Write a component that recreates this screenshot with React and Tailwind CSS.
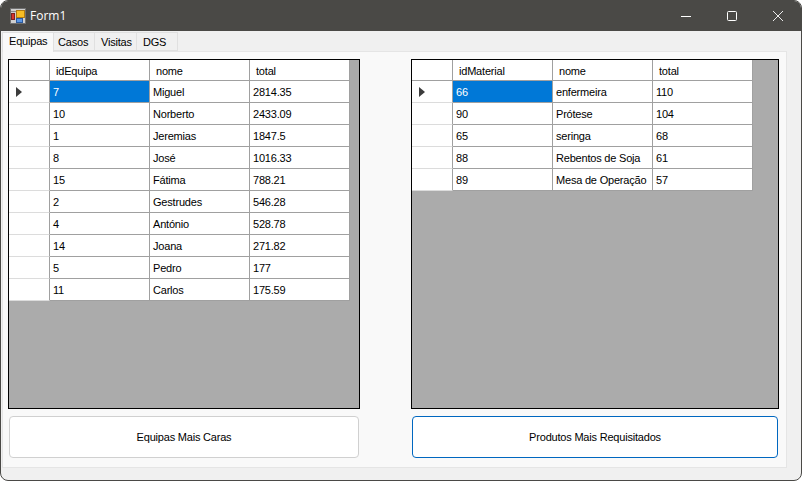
const teams = [
  ["7", "Miguel", "2814.35"],
  ["10", "Norberto", "2433.09"],
  ["1", "Jeremias", "1847.5"],
  ["8", "José", "1016.33"],
  ["15", "Fátima", "788.21"],
  ["2", "Gestrudes", "546.28"],
  ["4", "António", "528.78"],
  ["14", "Joana", "271.82"],
  ["5", "Pedro", "177"],
  ["11", "Carlos", "175.59"]
];

const materials = [
  ["66", "enfermeira", "110"],
  ["90", "Prótese", "104"],
  ["65", "seringa", "68"],
  ["88", "Rebentos de Soja", "61"],
  ["89", "Mesa de Operação", "57"]
];

const FormIcon = () => (
  <svg width="16" height="16" viewBox="0 0 16 16" className="shrink-0">
    <rect x="0.5" y="0.5" width="15" height="15" fill="#cfcfcf" stroke="#707070" />
    <rect x="1" y="3" width="14" height="1" fill="#8a8a8a" />
    <rect x="6.5" y="2.5" width="8" height="7" fill="#f6bd24" stroke="#b07a10" />
    <rect x="1.5" y="5.5" width="3" height="6" fill="#d8342c" stroke="#7c2320" />
    <rect x="6.5" y="10.5" width="6" height="4" fill="#5a96e4" stroke="#2c5a9e" />
  </svg>
);

const Grid = ({ first, rows }) => (
  <div className="h-[350px] border border-black bg-[#ababab]">
    <div className="w-fit">
      <div className="flex h-[21px] bg-white border-b border-[#a0a0a0]">
        <div className="w-[41px] border-r border-[#a0a0a0]" />
        {[first, "nome", "total"].map((h) => (
          <div key={h} className="w-[100px] pl-[6px] leading-[22px] border-r border-[#a0a0a0]">
            {h}
          </div>
        ))}
      </div>
      {rows.map((row, i) => (
        <div key={row[0]} className="flex h-[22px]">
          <div className="w-[41px] flex items-center pl-[7px] bg-white border-r border-b border-r-[#a0a0a0] border-b-[#dcdcdc]">
            {i === 0 && (
              <svg width="6" height="10" viewBox="0 0 6 10">
                <path d="M0 0 L6 5 L0 10 Z" fill="#3c3c3c" />
              </svg>
            )}
          </div>
          {row.map((cell, j) => (
            <div
              key={j}
              className={
                i === 0 && j === 0
                  ? "w-[100px] pl-[3px] leading-[22px] whitespace-nowrap bg-[#0078d7] text-white border-r border-b border-[#a0a0a0]"
                  : "w-[100px] pl-[3px] leading-[22px] whitespace-nowrap bg-white border-r border-b border-[#a0a0a0]"
              }
            >
              {cell}
            </div>
          ))}
        </div>
      ))}
    </div>
  </div>
);

export default function App() {
  return (
    <div className="w-[802px] h-[482px] bg-white overflow-hidden text-[11px] tracking-[-0.2px] text-black font-['Liberation_Sans',sans-serif]">
      <div className="w-[802px] h-[481px] flex flex-col bg-[#f0f0f0] border border-[#4a4946] rounded-lg overflow-hidden">
        {/* TITLE BAR */}
        <div className="h-[30px] shrink-0 flex items-center bg-[#4a4946] text-white">
          <div className="pl-[9px] pr-[4px]">
            <FormIcon />
          </div>
          <span className="text-[12px] tracking-normal font-['Open_Sans',sans-serif]">Form1</span>
          <div className="ml-auto flex">
            <div className="w-[46px] flex justify-center">
              <svg width="10" height="10" viewBox="0 0 10 10">
                <path d="M0 5.5 H10" stroke="#ffffff" fill="none" />
              </svg>
            </div>
            <div className="w-[46px] flex justify-center">
              <svg width="10" height="10" viewBox="0 0 10 10">
                <rect x="0.5" y="0.5" width="9" height="9" rx="1" stroke="#ffffff" fill="none" />
              </svg>
            </div>
            <div className="w-[46px] flex justify-center">
              <svg width="10" height="10" viewBox="0 0 10 10">
                <path d="M0 0 L10 10 M10 0 L0 10" stroke="#ffffff" strokeWidth="0.9" fill="none" />
              </svg>
            </div>
          </div>
        </div>

        {/* TABS */}
        <div className="h-[20px] shrink-0 flex items-end pl-[1px]">
          <div className="h-[20px] w-[52px] pl-[6px] leading-[17px] bg-[#f9f9f9] border border-b-0 border-[#e0e0e0] relative z-10 -mb-[1px]">
            Equipas
          </div>
          <div className="h-[19px] w-[41px] pl-[4px] leading-[19px] border border-l-0 border-[#e0e0e0]">Casos</div>
          <div className="h-[19px] w-[42px] pl-[6px] leading-[19px] border border-l-0 border-[#e0e0e0]">Visitas</div>
          <div className="h-[19px] w-[41px] pl-[6px] leading-[19px] border border-l-0 border-[#e0e0e0]">DGS</div>
        </div>

        {/* PAGE */}
        <div className="ml-[1px] w-[785px] h-[417px] bg-[#f9f9f9] border border-[#e5e5e5] pt-[7px] pl-[5px] flex gap-[51px]">
          <div className="w-[352px] flex flex-col gap-[7px]">
            <Grid first="idEquipa" rows={teams} />
            <button className="w-[350px] ml-[1px] h-[42px] bg-white border border-[#d0d0d0] rounded-[4px]">
              Equipas Mais Caras
            </button>
          </div>
          <div className="w-[368px] flex flex-col gap-[7px]">
            <Grid first="idMaterial" rows={materials} />
            <button className="w-[366px] ml-[1px] h-[42px] bg-white border border-[#0067c0] rounded-[4px]">
              Produtos Mais Requisitados
            </button>
          </div>
        </div>
      </div>
    </div>
  );
}
